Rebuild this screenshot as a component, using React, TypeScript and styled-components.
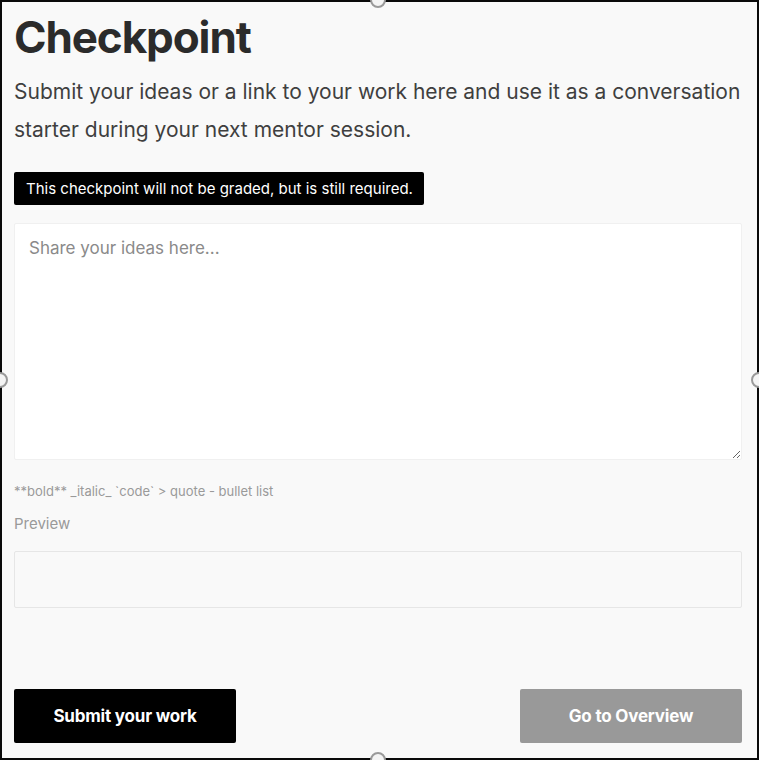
import React from "react";
import styled, { createGlobalStyle } from "styled-components";

const Global = createGlobalStyle`
  html, body { margin: 0; padding: 0; background: #ffffff; }
  * { box-sizing: border-box; }
`;

const Frame = styled.div`
  position: relative;
  width: 759px;
  height: 760px;
  border: 2px solid #0a0a0a;
  background: #f9f9f9;
  font-family: Inter, "Liberation Sans", sans-serif;
  display: flex;
  flex-direction: column;
  padding: 0 15px 15px 12px;
`;

const Title = styled.h1`
  margin: 7px 0 0 0;
  font-size: 44px;
  line-height: 56px;
  font-weight: 700;
  color: #2b2b2b;
  letter-spacing: -1.1px;
`;

const Lead = styled.p`
  margin: 8px 0 0 0;
  font-size: 21px;
  line-height: 38px;
  color: #3f3f3f;
  font-weight: 400;
`;

const Tag = styled.div`
  align-self: flex-start;
  margin-top: 23px;
  background: #000;
  color: #fff;
  font-size: 15px;
  line-height: 33px;
  height: 33px;
  padding: 0 11px 0 12px;
  border-radius: 2px;
`;

const TextArea = styled.textarea`
  margin-top: 18px;
  width: 100%;
  height: 237px;
  background: #fff;
  border: 1px solid #f0f0f0;
  border-radius: 2px;
  padding: 12px 14px;
  font-family: inherit;
  font-size: 17px;
  line-height: 24px;
  color: #333;
  resize: vertical;
  outline: none;
  &::placeholder { color: #8a8a8a; }
`;

const Hint = styled.div`
  margin-top: 22px;
  font-size: 13px;
  color: #9a9a9a;
  line-height: 18px;
`;

const Label = styled.div`
  margin-top: 14px;
  font-size: 15px;
  color: #9a9a9a;
  line-height: 20px;
`;

const PreviewBox = styled.div`
  margin-top: 17px;
  height: 57px;
  border: 1px solid #e6e6e6;
  border-radius: 2px;
  background: #f9f9f9;
`;

const Actions = styled.div`
  margin-top: auto;
  display: flex;
  justify-content: space-between;
`;

const Button = styled.button<{ $variant: "dark" | "muted" }>`
  width: 222px;
  height: 54px;
  border: none;
  border-radius: 2px;
  font-family: inherit;
  font-size: 17px;
  font-weight: 700;
  color: #fff;
  letter-spacing: -0.2px;
  background: ${(p) => (p.$variant === "dark" ? "#000" : "#999999")};
  cursor: pointer;
`;

const Handle = styled.span<{ $x: string; $y: string }>`
  position: absolute;
  left: ${(p) => p.$x};
  top: ${(p) => p.$y};
  width: 16px;
  height: 16px;
  margin: -8px 0 0 -8px;
  border-radius: 50%;
  border: 2px solid #9a9a9a;
  background: #f4f4f4;
`;

export default function App() {
  return (
    <>
      <Global />
      <Frame>
        <Title>Checkpoint</Title>
        <Lead>
          Submit your ideas or a link to your work here and use it as a conversation starter
          during your next mentor session.
        </Lead>
        <Tag>This checkpoint will not be graded, but is still required.</Tag>
        <TextArea placeholder="Share your ideas here..." />
        <Hint>**bold** _italic_ `code` &gt; quote - bullet list</Hint>
        <Label>Preview</Label>
        <PreviewBox />
        <Actions>
          <Button $variant="dark">Submit your work</Button>
          <Button $variant="muted">Go to Overview</Button>
        </Actions>
        <Handle $x="376px" $y="-2px" />
        <Handle $x="-2px" $y="378px" />
        <Handle $x="757px" $y="378px" />
        <Handle $x="376px" $y="758px" />
      </Frame>
    </>
  );
}
